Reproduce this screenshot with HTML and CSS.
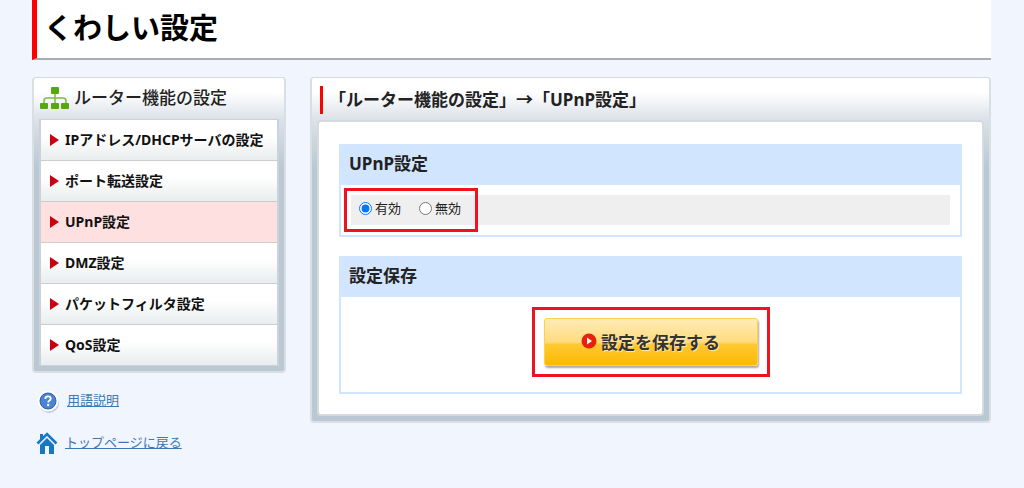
FILE: index.html
```
<!DOCTYPE html>
<html lang="ja">
<head>
<meta charset="utf-8">
<title>くわしい設定</title>
<link rel="stylesheet" href="styles.css">
</head>

<body>

<h1 class="title">くわしい設定</h1>

<div class="wrap">

	<div class="side">

		<div class="panel">
			<h2 class="side_head">
				<svg width="30" height="24" viewBox="0 0 30 24" fill="#57a80c">
					<rect x="11" y="1" width="8" height="7" rx="1"/>
					<path d="M15 8v9M4 17v-2q0-3 3-3h16q3 0 3 3v2" fill="none" stroke="#7dbb45" stroke-width="1.5"/>
					<rect x="0" y="17" width="8" height="6" rx="1"/>
					<rect x="11" y="17" width="8" height="6" rx="1"/>
					<rect x="21" y="17" width="8" height="6" rx="1"/>
				</svg>
				ルーター機能の設定
			</h2>

			<ul class="menu">
				<li><a href="#">IPアドレス/DHCPサーバの設定</a></li>
				<li><a href="#">ポート転送設定</a></li>
				<li><a href="#" class="current">UPnP設定</a></li>
				<li><a href="#">DMZ設定</a></li>
				<li><a href="#">パケットフィルタ設定</a></li>
				<li><a href="#">QoS設定</a></li>
			</ul>
		</div>

		<ul class="links">
			<li>
				<svg width="24" height="24" viewBox="0 0 24 24">
					<circle cx="13" cy="14" r="10" fill="#bccbe2"/>
					<circle cx="12" cy="12" r="10.500" fill="#fff"/>
					<circle cx="12" cy="12" r="8" fill="#4a84d2" stroke="#2d61ad"/>
					<path d="M9.300 10q0-2.700 2.700-2.700t2.700 2.300q0 1.300-1.500 2.100-1 .6-1 1.800" fill="none" stroke="#fff" stroke-width="1.800"/>
					<circle cx="12.200" cy="16" r="1.200" fill="#fff"/>
				</svg>
				<a href="#">用語説明</a>
			</li>
			<li>
				<svg width="22" height="24" viewBox="0 0 22 24" fill="#1877c2">
					<path d="M4 3h3v4l-3 3z"/>
					<path d="M1.500 12.500L11 3l9.500 9.500" fill="none" stroke="#1877c2" stroke-width="2.600"/>
					<path d="M4 14l7-7 7 7v9h-5v-8H9v8H4z"/>
				</svg>
				<a href="#">トップページに戻る</a>
			</li>
		</ul>

	</div>

	<div class="panel main">
		<h2 class="main_head"><span>「ルーター機能の設定」→「UPnP設定」</span></h2>

		<form class="content" name="upnp">

			<div class="block">
				<h3>UPnP設定</h3>
				<div class="row">
					<div class="radios mark">
						<label><input type="radio" name="use" value="1" checked>有効</label>
						<label><input type="radio" name="use" value="0">無効</label>
					</div>
				</div>
			</div>

			<div class="block">
				<h3>設定保存</h3>
				<div class="save">
					<div class="mark">
						<button type="button">
							<svg width="16" height="16" viewBox="0 0 16 16">
								<circle cx="8" cy="8" r="7.500" fill="#e8210c"/>
								<path d="M6 4.500v7l5-3.500z" fill="#fff"/>
							</svg>
							設定を保存する
						</button>
					</div>
				</div>
			</div>

		</form>
	</div>

</div>

</body>

</html>
```
FILE: styles.css
```
* {
	box-sizing: border-box;
}

body {
	margin: 0;
	padding: 0 33px 32px 32px;
	background: #f0f5fe;
	color: #222;
	font-family: "Noto Sans", "Noto Sans CJK JP", sans-serif;
	font-size: 13px;
	line-height: 20px;
}

h1, h2, h3, ul {
	margin: 0;
	padding: 0;
}

ul {
	list-style: none;
}

svg {
	flex: none;
}

.title {
	padding: 8px 7px 10px;
	border-left: 5px solid #f00;
	border-bottom: 2px solid #aaacaf;
	background: #fff;
	color: #000;
	font-size: 29px;
	line-height: 40px;
}

.wrap {
	display: flex;
	align-items: flex-start;
	gap: 24px;
	margin-top: 17px;
}

.side {
	flex: none;
	width: 254px;
}

.panel {
	padding: 0 5px 5px;
	border: 2px solid #dadfe4;
	border-top: 1px solid #d5d9dd;
	border-radius: 4px;
	background: linear-gradient(#fff 14px, #dce2e9 41px, #b9c8d3 90px);
}

.main {
	flex: 1;
}

.side_head {
	display: flex;
	align-items: center;
	gap: 4px;
	height: 41px;
	padding: 0 1px 2px;
	font-size: 17px;
	font-weight: 500;
}

.menu {
	border: 1px solid #ccd2d7;
	border-right-width: 2px;
	border-left-width: 2px;
}

.menu a {
	display: flex;
	align-items: center;
	gap: 6px;
	height: 41px;
	padding-left: 9px;
	border-bottom: 1px solid #c9cdcf;
	background: linear-gradient(#fff 40%, #e9eded);
	color: #111;
	font-size: 14px;
	font-weight: bold;
	text-decoration: none;
}

.menu li:last-child a {
	height: 40px;
	border-bottom: 0;
}

/* red arrow */
.menu a:before {
	content: "";
	border: 6px solid transparent;
	border-left: 9px solid #c9000f;
	border-right: 0;
}

.menu a.current {
	background: #ffe0e0;
}

.links {
	display: flex;
	flex-direction: column;
	gap: 18px;
	padding: 16px 4px;
}

.links li {
	display: flex;
	align-items: center;
	gap: 7px;
}

.links a {
	padding-bottom: 2px;
	color: #3c78b4;
}

.main_head {
	display: flex;
	align-items: center;
	height: 42px;
	padding-top: 2px;
	font-size: 17px;
	line-height: 28px;
}

.main_head span {
	margin-left: 3px;
	padding-left: 6px;
	border-left: 3px solid #f00;
}

.content {
	display: flex;
	flex-direction: column;
	gap: 19px;
	padding: 22px 20px 20px;
	border: 2px solid #d5dade;
	border-radius: 4px;
	background: #fff;
}

.block {
	border: 2px solid #d1e5ff;
}

.block h3 {
	padding: 4px 8px 7px;
	background: #d1e5ff;
	font-size: 17px;
	line-height: 28px;
}

.row {
	display: flex;
	margin: 10px;
	background: #efefef;
}

.radios {
	display: flex;
	gap: 18px;
	padding: 3px 10px 7px 8px;
}

.radios label {
	display: flex;
	align-items: center;
	gap: 3px;
}

.radios input {
	margin: 0;
}

.save {
	display: flex;
	justify-content: center;
	padding: 21px 0 26px;
}

/* red frame over the controls */
.mark {
	position: relative;
}

.mark:after {
	content: "";
	position: absolute;
	inset: -7px;
	border: 3px solid #ed1320;
	pointer-events: none;
}

.save .mark:after {
	inset: -11px -12px;
}

button {
	display: flex;
	align-items: center;
	justify-content: center;
	gap: 4px;
	width: 214px;
	height: 48px;
	padding: 0 0 2px;
	border: 1px solid #fbd24b;
	border-radius: 3px;
	background: linear-gradient(#ffebb5, #ffdb80 50%, #ffc933 55%, #fdb802);
	box-shadow: 1px 2px 2px #aaa;
	color: #333;
	font-family: inherit;
	font-size: 17px;
	font-weight: bold;
	text-shadow: 1px 1px 1px #ffe9b0;
	cursor: pointer;
}
```
